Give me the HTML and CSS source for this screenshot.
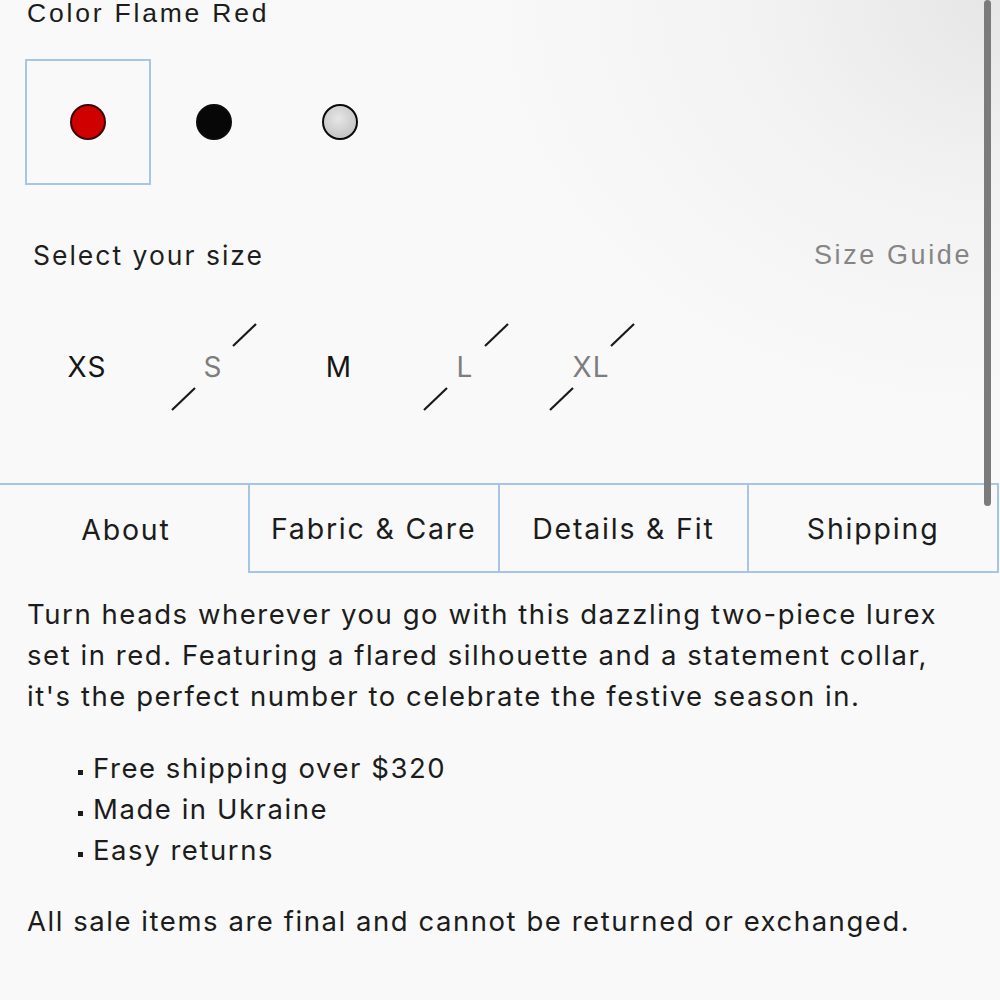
FILE: index.html
```html
<!DOCTYPE html>
<html>
<head>
<meta charset="utf-8">
<link rel="stylesheet" href="styles.css">
</head>
<body>
<div class="page">
  <div class="color-label">Color Flame Red</div>
  <div class="swatches">
    <div class="swatch selected"><span class="dot red"></span></div>
    <div class="swatch"><span class="dot black"></span></div>
    <div class="swatch"><span class="dot silver"></span></div>
  </div>
  <div class="size-head">
    <span class="size-title">Select your size</span>
    <span class="size-guide">Size Guide</span>
  </div>
  <div class="sizes">
    <div class="size">XS</div>
    <div class="size na">S<svg class="strike" viewBox="0 0 126 126"><line x1="22" y1="106" x2="45" y2="84"/><line x1="83" y1="42" x2="106" y2="20"/></svg></div>
    <div class="size">M</div>
    <div class="size na">L<svg class="strike" viewBox="0 0 126 126"><line x1="22" y1="106" x2="45" y2="84"/><line x1="83" y1="42" x2="106" y2="20"/></svg></div>
    <div class="size na">XL<svg class="strike" viewBox="0 0 126 126"><line x1="22" y1="106" x2="45" y2="84"/><line x1="83" y1="42" x2="106" y2="20"/></svg></div>
  </div>
  <div class="tabs">
    <div class="tab active">About</div>
    <div class="tab">Fabric &amp; Care</div>
    <div class="tab">Details &amp; Fit</div>
    <div class="tab">Shipping</div>
  </div>
  <div class="desc">
    <p class="intro">Turn heads wherever you go with this dazzling two-piece lurex set in red. Featuring a flared silhouette and a statement collar, it's the perfect number to celebrate the festive season in.</p>
    <ul class="points">
      <li>Free shipping over $320</li>
      <li>Made in Ukraine</li>
      <li>Easy returns</li>
    </ul>
    <p class="note">All sale items are final and cannot be returned or exchanged.</p>
  </div>
  <div class="scrollbar"></div>
</div>
</body>
</html>
```
FILE: styles.css
```css
html, body {
  margin: 0;
  padding: 0;
}
body {
  width: 1000px;
  height: 1000px;
  overflow: hidden;
  background: radial-gradient(ellipse 520px 420px at 1000px 0px, #e6e6e6 0%, #f2f2f2 45%, #f9f9f9 100%), #f9f9f9;
  font-family: Inter, "Noto Sans", sans-serif;
  color: #1e1e1e;
}
.page {
  position: relative;
  height: 1000px;
}
.color-label {
  font-family: "Liberation Sans", Arial, sans-serif;
  font-size: 26.5px;
  letter-spacing: 2.8px;
  line-height: 26px;
  padding-left: 27px;
  color: #1c1c1c;
}
.swatches {
  display: flex;
  margin-top: 33px;
  padding-left: 25px;
}
.swatch {
  width: 126px;
  height: 126px;
  box-sizing: border-box;
  display: flex;
  align-items: center;
  justify-content: center;
  border: 2px solid transparent;
}
.swatch.selected {
  border-color: #a6c6e6;
}
.dot {
  width: 36px;
  height: 36px;
  box-sizing: border-box;
  border-radius: 50%;
  border: 2px solid #0c0c0c;
}
.dot.red { background: #d00000; border-color: #3a0505; }
.dot.black { background: #070707; }
.dot.silver { background: radial-gradient(circle at 45% 40%, #e6e6e6, #c7c7c7 70%); border-color: #0a0a0a; }
.size-head {
  display: flex;
  justify-content: space-between;
  align-items: center;
  margin-top: 52px;
  padding: 0 28px 0 33px;
  height: 36px;
}
.size-title {
  font-family: Inter, sans-serif;
  font-size: 26.5px;
  letter-spacing: 2px;
  color: #1e1e1e;
}
.size-guide {
  font-family: "Liberation Sans", Arial, sans-serif;
  font-size: 27px;
  letter-spacing: 2.6px;
  color: #858585;
}
.sizes {
  display: flex;
  padding-left: 24px;
  margin-top: 31px;
}
.size {
  position: relative;
  width: 126px;
  height: 126px;
  display: flex;
  align-items: center;
  justify-content: center;
  font-family: Inter, sans-serif;
  font-size: 28px;
  letter-spacing: 1px;
  color: #151515;
}
.size.na {
  color: #7d7d7d;
}
.strike {
  position: absolute;
  left: 0;
  top: 0;
  width: 126px;
  height: 126px;
  stroke: #1a1a1a;
  stroke-width: 2.2;
}
.tabs {
  display: flex;
  width: 999px;
  margin-top: 53px;
  border-top: 2px solid #a6c6e6;
}
.tab {
  flex: 1;
  height: 88px;
  box-sizing: border-box;
  display: flex;
  align-items: center;
  justify-content: center;
  font-size: 28.5px;
  letter-spacing: 1.8px;
  color: #1c1c1c;
  border: 2px solid #a6c6e6;
  border-top: none;
  border-left-width: 0;
}
.tab + .tab {
  border-left-width: 2px;
  margin-left: -2px;
}
.tab.active {
  border: none;
  padding-left: 2px;
}
.desc {
  padding: 0 27px;
  font-size: 27.5px;
  letter-spacing: 1.55px;
  line-height: 41px;
  color: #1c1c1c;
}
.intro {
  margin: 21px 0 0;
}
.points {
  list-style: none;
  margin: 31px 0 0;
  padding-left: 49px;
}
.points li {
  position: relative;
  padding-left: 17px;
}
.points li::before {
  content: "";
  position: absolute;
  left: 2px;
  top: 22px;
  width: 5px;
  height: 5px;
  background: #1c1c1c;
}
.note {
  margin: 30px 0 0;
}
.scrollbar {
  position: absolute;
  top: 0;
  left: 984px;
  width: 7px;
  height: 506px;
  border-radius: 4px;
  background: #7b7b7b;
}
```
